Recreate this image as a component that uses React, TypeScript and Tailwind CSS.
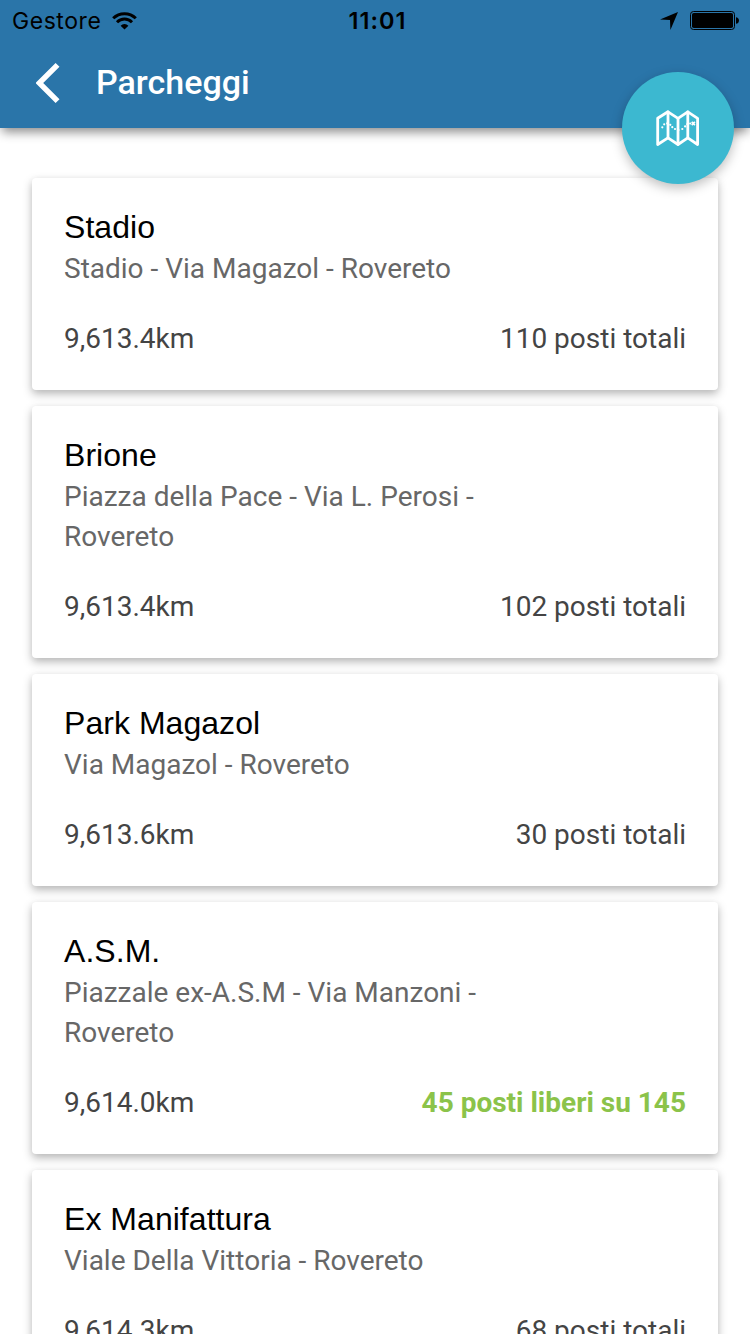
import React from "react";

type Parking = {
  name: string;
  address: string;
  distance: string;
  spots: string;
  live?: boolean;
};

const parkings: Parking[] = [
  { name: "Stadio", address: "Stadio - Via Magazol - Rovereto", distance: "9,613.4km", spots: "110 posti totali" },
  { name: "Brione", address: "Piazza della Pace - Via L. Perosi - Rovereto", distance: "9,613.4km", spots: "102 posti totali" },
  { name: "Park Magazol", address: "Via Magazol - Rovereto", distance: "9,613.6km", spots: "30 posti totali" },
  { name: "A.S.M.", address: "Piazzale ex-A.S.M - Via Manzoni - Rovereto", distance: "9,614.0km", spots: "45 posti liberi su 145", live: true },
  { name: "Ex Manifattura", address: "Viale Della Vittoria - Rovereto", distance: "9,614.3km", spots: "68 posti totali" },
];

function StatusBar() {
  return (
    <div className="grid h-[41px] grid-cols-[1fr_auto_1fr] items-center pl-3 pr-[11px] font-[Inter,sans-serif] text-black">
      <div className="flex items-center gap-[11px]">
        <span className="pt-px text-[23px] leading-10 tracking-[0.55px]">Gestore</span>
        <svg className="h-[18px] w-[25px]" viewBox="0 0 25 18" fill="none" stroke="currentColor" strokeWidth="3">
          <path d="M1.2 6.3a16 16 0 0 1 22.6 0" />
          <path d="M5 10.2a10.6 10.6 0 0 1 15 0" />
          <path d="M8.6 13.7a5.5 5.5 0 0 1 7.8 0L12.5 17.6Z" fill="currentColor" stroke="none" />
        </svg>
      </div>
      <span className="pl-1 pt-px text-[23.5px] font-semibold leading-10 tracking-[1px]">11:01</span>
      <div className="flex items-center justify-end gap-3">
        <svg className="h-[18px] w-[18px]" viewBox="0 0 18 18" fill="currentColor">
          <path d="M18 0 10.4 18 10 8 0 7.6Z" />
        </svg>
        <svg className="h-[19px] w-[49px]" viewBox="0 0 49 19" fill="currentColor">
          <rect x="0.5" y="0.5" width="44" height="18" rx="3" fill="none" stroke="currentColor" />
          <rect x="2" y="2" width="41" height="15" rx="1.8" />
          <path d="M46 6.2c1.6 0 3 1.3 3 3.3s-1.4 3.3-3 3.3Z" />
        </svg>
      </div>
    </div>
  );
}

function MapIcon() {
  return (
    <svg className="h-[38px] w-[44px]" viewBox="0 0 44 38" fill="none" stroke="white" strokeWidth="2.8" strokeLinejoin="round" strokeLinecap="round">
      <path d="M1.7 9.3 12 2.8l10 6.5 9.8-6.5 9.8 6.5v26.2L31.8 28.8 22 35.5 12 28.8 1.7 35.5Z" />
      <path d="M12 2.8v26M22 9.3v26M31.8 2.8v26" />
      <path d="M6.3 18.3h.01M8.2 15.3h.01M11.2 14.4h.01M14.3 15.8h.01M16.3 18.2h.01M19 20h.01M22.5 21h.01M26.3 20h.01M29.1 17.4h.01M31.4 15.2h.01M34.2 14.5h.01" strokeWidth="2.2" />
      <path d="m35.7 12.9 3.2 3.2m0-3.2-3.2 3.2" strokeWidth="1.7" strokeLinecap="butt" />
    </svg>
  );
}

function ParkingCard({ parking }: { parking: Parking }) {
  return (
    <li className="rounded-[4px] bg-white px-8 pb-[31px] pt-7 shadow-[0_4px_10px_rgba(0,0,0,0.27),0_1px_6px_rgba(0,0,0,0.04)]">
      <h2 className="mb-px font-['Liberation_Sans',Arial,sans-serif] text-[32px] leading-[42px] tracking-[0.04px] text-black">{parking.name}</h2>
      <p className="max-w-[450px] text-[28px] leading-10 text-[#676767]">{parking.address}</p>
      <div className="mt-[30px] flex justify-between text-[28px] leading-10 text-[#444]">
        <span>{parking.distance}</span>
        <span className={parking.live ? "font-bold text-[#8bc34a]" : ""}>{parking.spots}</span>
      </div>
    </li>
  );
}

export default function App() {
  return (
    <div className="relative h-[1334px] w-[750px] overflow-hidden bg-white font-[Roboto,sans-serif]">
      <header className="relative h-32 bg-[#2a75a9] shadow-[0_6px_10px_-2px_rgba(0,0,0,0.46)]">
        <StatusBar />
        <div className="flex h-[87px] items-center pb-[3px] pl-9">
          <svg className="h-10 w-6" viewBox="0 0 24 40" fill="white">
            <path d="M19.6 0 23.5 3.8 7.2 20 23.5 36.2 19.6 40-.4 20Z" />
          </svg>
          <h1 className="pb-[3px] pl-9 text-[34px] font-medium leading-10 text-white">Parcheggi</h1>
        </div>
      </header>
      <button
        aria-label="Mappa"
        className="absolute right-4 top-[72px] flex size-28 items-center justify-center rounded-full bg-[#3cb8d0] shadow-[0_4px_12px_rgba(0,0,0,0.26)]"
      >
        <MapIcon />
      </button>
      <ul className="flex flex-col gap-4 pl-8 pr-8 pt-[50px]">
        {parkings.map((parking) => (
          <ParkingCard key={parking.name} parking={parking} />
        ))}
      </ul>
    </div>
  );
}
